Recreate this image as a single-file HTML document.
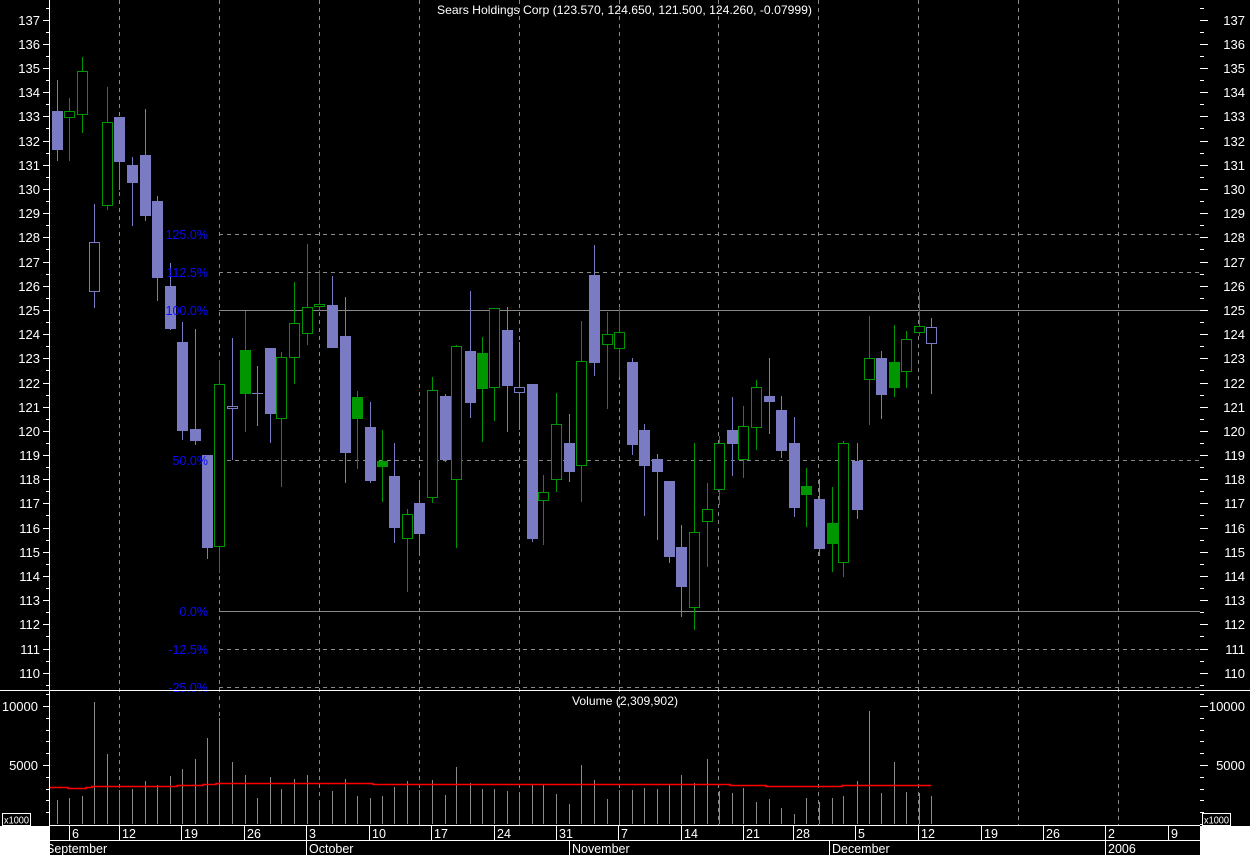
<!DOCTYPE html>
<html><head><meta charset="utf-8"><style>
html,body{margin:0;padding:0;background:#000;}
svg{display:block;}
text{font-family:"Liberation Sans",sans-serif;fill:#fff;}
.l{stroke:#7b7bc3;stroke-width:1;fill:none}
.lf{fill:#7b7bc3}
.lh{fill:#000;stroke:#7b7bc3;stroke-width:1}
.g{stroke:#009600;stroke-width:1;fill:none}
.gf{fill:#009600}
.gh{fill:#000;stroke:#009600;stroke-width:1}
.v{stroke:#8a8a8a;stroke-width:1}
.fib{fill:#0a0aff;font-size:12.5px}
</style></head><body>
<svg width="1250" height="855" viewBox="0 0 1250 855" xmlns="http://www.w3.org/2000/svg">
<rect width="1250" height="855" fill="#000"/>
<g stroke="#8a8a8a" stroke-dasharray="4,4" stroke-width="1">
<path d="M119.5 0V825M219.5 0V825M319.5 0V825M419.5 0V825M519.5 0V825M619.5 0V825M718.5 0V825M818.5 0V825M918.5 0V825M1018.5 0V825M1118.5 0V825"/>
<path d="M219 234.5H1200M219 272.5H1200M219 460.5H1200M219 649.5H1200M219 687.5H1200"/>
</g>
<path d="M219 310.5H1200M219 611.5H1200" stroke="#8a8a8a" stroke-width="1"/>
<g>
<line class="l" x1="57.5" y1="80" x2="57.5" y2="161"/><rect class="lf" x="52" y="111" width="11" height="39"/>
<line class="g" x1="69.5" y1="98" x2="69.5" y2="161"/><rect class="gh" x="64.5" y="111.5" width="10" height="6"/>
<line class="g" x1="82.5" y1="57" x2="82.5" y2="133"/><rect class="gh" x="77.5" y="71.5" width="10" height="43"/>
<line class="l" x1="94.5" y1="204" x2="94.5" y2="308"/><rect class="lh" x="89.5" y="242.5" width="10" height="49"/>
<line class="g" x1="107.5" y1="87" x2="107.5" y2="210"/><rect class="gh" x="102.5" y="122.5" width="10" height="83"/>
<line class="l" x1="119.5" y1="117" x2="119.5" y2="190"/><rect class="lf" x="114" y="117" width="11" height="45"/>
<line class="l" x1="132.5" y1="157" x2="132.5" y2="226"/><rect class="lf" x="127" y="165" width="11" height="18"/>
<line class="l" x1="145.5" y1="109" x2="145.5" y2="221"/><rect class="lf" x="140" y="155" width="11" height="61"/>
<line class="l" x1="157.5" y1="196" x2="157.5" y2="301"/><rect class="lf" x="152" y="201" width="11" height="77"/>
<line class="l" x1="170.5" y1="263" x2="170.5" y2="330"/><rect class="lf" x="165" y="286" width="11" height="43"/>
<line class="l" x1="182.5" y1="322" x2="182.5" y2="440"/><rect class="lf" x="177" y="342" width="11" height="89"/>
<line class="l" x1="195.5" y1="329" x2="195.5" y2="445"/><rect class="lf" x="190" y="429" width="11" height="12"/>
<line class="l" x1="207.5" y1="455" x2="207.5" y2="559"/><rect class="lf" x="202" y="455" width="11" height="93"/>
<line class="g" x1="219.5" y1="360" x2="219.5" y2="573"/><rect class="gh" x="214.5" y="384.5" width="10" height="162"/>
<line class="l" x1="232.5" y1="338" x2="232.5" y2="460"/><rect class="lh" x="227.5" y="406.5" width="10" height="2"/>
<line class="g" x1="245.5" y1="311" x2="245.5" y2="432"/><rect class="gf" x="240" y="350" width="11" height="44"/>
<line class="l" x1="257.5" y1="366" x2="257.5" y2="426"/><line class="l" x1="252" y1="393.5" x2="263" y2="393.5"/>
<line class="l" x1="270.5" y1="348" x2="270.5" y2="443"/><rect class="lf" x="265" y="348" width="11" height="66"/>
<line class="g" x1="281.5" y1="352" x2="281.5" y2="487"/><rect class="gh" x="276.5" y="357.5" width="10" height="61"/>
<line class="g" x1="294.5" y1="282" x2="294.5" y2="384"/><rect class="gh" x="289.5" y="323.5" width="10" height="34"/>
<line class="g" x1="307.5" y1="244" x2="307.5" y2="345"/><rect class="gh" x="302.5" y="307.5" width="10" height="26"/>
<line class="g" x1="319.5" y1="270" x2="319.5" y2="310"/><rect class="gh" x="314.5" y="304.5" width="10" height="2"/>
<line class="l" x1="332.5" y1="276" x2="332.5" y2="348"/><rect class="lf" x="327" y="305" width="11" height="43"/>
<line class="l" x1="345.5" y1="297" x2="345.5" y2="483"/><rect class="lf" x="340" y="336" width="11" height="117"/>
<line class="g" x1="357.5" y1="391" x2="357.5" y2="469"/><rect class="gf" x="352" y="397" width="11" height="22"/>
<line class="l" x1="370.5" y1="402" x2="370.5" y2="483"/><rect class="lf" x="365" y="427" width="11" height="54"/>
<line class="g" x1="382.5" y1="430" x2="382.5" y2="502"/><rect class="gf" x="377" y="461" width="11" height="6"/>
<line class="l" x1="394.5" y1="443" x2="394.5" y2="543"/><rect class="lf" x="389" y="476" width="11" height="52"/>
<line class="g" x1="407.5" y1="509" x2="407.5" y2="592"/><rect class="gh" x="402.5" y="514.5" width="10" height="24"/>
<line class="l" x1="419.5" y1="480" x2="419.5" y2="554"/><rect class="lf" x="414" y="503" width="11" height="31"/>
<line class="g" x1="432.5" y1="377" x2="432.5" y2="503"/><rect class="gh" x="427.5" y="390.5" width="10" height="107"/>
<line class="l" x1="445.5" y1="394" x2="445.5" y2="462"/><rect class="lf" x="440" y="396" width="11" height="64"/>
<line class="g" x1="456.5" y1="345" x2="456.5" y2="548"/><rect class="gh" x="451.5" y="346.5" width="10" height="133"/>
<line class="l" x1="470.5" y1="291" x2="470.5" y2="418"/><rect class="lf" x="465" y="351" width="11" height="52"/>
<line class="g" x1="482.5" y1="337" x2="482.5" y2="442"/><rect class="gf" x="477" y="353" width="11" height="36"/>
<line class="g" x1="494.5" y1="308" x2="494.5" y2="421"/><rect class="gh" x="489.5" y="308.5" width="10" height="79"/>
<line class="l" x1="507.5" y1="307" x2="507.5" y2="432"/><rect class="lf" x="502" y="330" width="11" height="56"/>
<line class="l" x1="519.5" y1="342" x2="519.5" y2="430"/><rect class="lh" x="514.5" y="387.5" width="10" height="5"/>
<line class="l" x1="532.5" y1="384" x2="532.5" y2="542"/><rect class="lf" x="527" y="384" width="11" height="155"/>
<line class="g" x1="543.5" y1="475" x2="543.5" y2="545"/><rect class="gh" x="538.5" y="492.5" width="10" height="8"/>
<line class="g" x1="556.5" y1="393" x2="556.5" y2="492"/><rect class="gh" x="551.5" y="424.5" width="10" height="55"/>
<line class="l" x1="569.5" y1="414" x2="569.5" y2="482"/><rect class="lf" x="564" y="443" width="11" height="29"/>
<line class="g" x1="581.5" y1="321" x2="581.5" y2="502"/><rect class="gh" x="576.5" y="361.5" width="10" height="104"/>
<line class="l" x1="594.5" y1="245" x2="594.5" y2="376"/><rect class="lf" x="589" y="275" width="11" height="88"/>
<line class="g" x1="607.5" y1="312" x2="607.5" y2="409"/><rect class="gh" x="602.5" y="334.5" width="10" height="10"/>
<line class="g" x1="619.5" y1="307" x2="619.5" y2="377"/><rect class="gh" x="614.5" y="332.5" width="10" height="16"/>
<line class="l" x1="632.5" y1="358" x2="632.5" y2="455"/><rect class="lf" x="627" y="362" width="11" height="83"/>
<line class="l" x1="644.5" y1="424" x2="644.5" y2="516"/><rect class="lf" x="639" y="430" width="11" height="36"/>
<line class="l" x1="657.5" y1="454" x2="657.5" y2="540"/><rect class="lf" x="652" y="459" width="11" height="13"/>
<line class="l" x1="669.5" y1="481" x2="669.5" y2="563"/><rect class="lf" x="664" y="481" width="11" height="76"/>
<line class="l" x1="681.5" y1="525" x2="681.5" y2="617"/><rect class="lf" x="676" y="547" width="11" height="40"/>
<line class="g" x1="694.5" y1="443" x2="694.5" y2="630"/><rect class="gh" x="689.5" y="532.5" width="10" height="75"/>
<line class="g" x1="707.5" y1="483" x2="707.5" y2="567"/><rect class="gh" x="702.5" y="509.5" width="10" height="12"/>
<line class="g" x1="719.5" y1="436" x2="719.5" y2="505"/><rect class="gh" x="714.5" y="443.5" width="10" height="46"/>
<line class="l" x1="732.5" y1="397" x2="732.5" y2="476"/><rect class="lf" x="727" y="430" width="11" height="14"/>
<line class="g" x1="743.5" y1="406" x2="743.5" y2="478"/><rect class="gh" x="738.5" y="426.5" width="10" height="33"/>
<line class="g" x1="756.5" y1="380" x2="756.5" y2="450"/><rect class="gh" x="751.5" y="387.5" width="10" height="40"/>
<line class="l" x1="769.5" y1="358" x2="769.5" y2="434"/><rect class="lf" x="764" y="396" width="11" height="6"/>
<line class="l" x1="781.5" y1="396" x2="781.5" y2="458"/><rect class="lf" x="776" y="410" width="11" height="41"/>
<line class="l" x1="794.5" y1="417" x2="794.5" y2="517"/><rect class="lf" x="789" y="443" width="11" height="65"/>
<line class="g" x1="806.5" y1="468" x2="806.5" y2="527"/><rect class="gf" x="801" y="486" width="11" height="9"/>
<line class="l" x1="819.5" y1="479" x2="819.5" y2="556"/><rect class="lf" x="814" y="499" width="11" height="50"/>
<line class="g" x1="832.5" y1="487" x2="832.5" y2="572"/><rect class="gf" x="827" y="523" width="11" height="21"/>
<line class="g" x1="843.5" y1="441" x2="843.5" y2="577"/><rect class="gh" x="838.5" y="443.5" width="10" height="119"/>
<line class="l" x1="857.5" y1="443" x2="857.5" y2="519"/><rect class="lf" x="852" y="461" width="11" height="49"/>
<line class="g" x1="869.5" y1="316" x2="869.5" y2="425"/><rect class="gh" x="864.5" y="358.5" width="10" height="21"/>
<line class="l" x1="881.5" y1="351" x2="881.5" y2="419"/><rect class="lf" x="876" y="358" width="11" height="37"/>
<line class="g" x1="894.5" y1="325" x2="894.5" y2="397"/><rect class="gf" x="889" y="362" width="11" height="26"/>
<line class="g" x1="906.5" y1="331" x2="906.5" y2="388"/><rect class="gh" x="901.5" y="339.5" width="10" height="32"/>
<line class="g" x1="919.5" y1="292" x2="919.5" y2="336"/><rect class="gh" x="914.5" y="326.5" width="10" height="6"/>
<line class="l" x1="931.5" y1="318" x2="931.5" y2="394"/><rect class="lh" x="926.5" y="327.5" width="10" height="16"/>
</g>
<g text-anchor="end">
<text x="208" y="239" class="fib">125.0%</text>
<text x="208" y="277" class="fib">112.5%</text>
<text x="208" y="315" class="fib">100.0%</text>
<text x="208" y="465" class="fib">50.0%</text>
<text x="208" y="616" class="fib">0.0%</text>
<text x="208" y="654" class="fib">-12.5%</text>
<text x="208" y="692" class="fib">-25.0%</text>
</g>
<path class="v" d="M57.5 824V800M69.5 824V798M82.5 824V796M94.5 824V702M107.5 824V754M119.5 824V790M132.5 824V789M145.5 824V781M157.5 824V785M170.5 824V776M182.5 824V769M195.5 824V759M207.5 824V738M219.5 824V718M232.5 824V762M245.5 824V775M257.5 824V798M270.5 824V777M281.5 824V789M294.5 824V779M307.5 824V775M319.5 824V802M332.5 824V791M345.5 824V779M357.5 824V796M370.5 824V798M382.5 824V796M394.5 824V787M407.5 824V781M419.5 824V790M432.5 824V780M445.5 824V795M456.5 824V767M470.5 824V783M482.5 824V789M494.5 824V789M507.5 824V791M519.5 824V793M532.5 824V785M543.5 824V785M556.5 824V794M569.5 824V804M581.5 824V765M594.5 824V780M607.5 824V799M619.5 824V790M632.5 824V790M644.5 824V788M657.5 824V789M669.5 824V785M681.5 824V775M694.5 824V783M707.5 824V759M719.5 824V791M732.5 824V793M743.5 824V788M756.5 824V802M769.5 824V799M781.5 824V808M794.5 824V814M806.5 824V798M819.5 824V802M832.5 824V798M843.5 824V796M857.5 824V781M869.5 824V711M881.5 824V793M894.5 824V762M906.5 824V792M919.5 824V793M931.5 824V796"/>
<path d="M49 787.5H68V788.5H86V787.5H92V786.5H177V785.5H203V784.5H216V783.5H373V784.5H730V785.5H766V786.5H842V785.5H931" stroke="#ff0000" stroke-width="1.5" fill="none"/>
<text x="437" y="14" font-size="12" textLength="375" lengthAdjust="spacingAndGlyphs">Sears Holdings Corp (123.570, 124.650, 121.500, 124.260, -0.07999)</text>
<text x="572" y="705" font-size="12" textLength="106" lengthAdjust="spacingAndGlyphs">Volume (2,309,902)</text>
<path d="M0 690.5H1250" stroke="#fff" stroke-width="1"/>
<path d="M49.5 0V855" stroke="#fff" stroke-width="1"/>
<path stroke="#fff" stroke-width="1" d="M43 20.5H49M43 44.5H49M43 68.5H49M43 92.5H49M43 116.5H49M43 141.5H49M43 165.5H49M43 189.5H49M43 213.5H49M43 237.5H49M43 262.5H49M43 286.5H49M43 310.5H49M43 334.5H49M43 358.5H49M43 383.5H49M43 407.5H49M43 431.5H49M43 455.5H49M43 479.5H49M43 503.5H49M43 528.5H49M43 552.5H49M43 576.5H49M43 600.5H49M43 624.5H49M43 649.5H49M43 673.5H49M46 8.5H49M46 32.5H49M46 56.5H49M46 80.5H49M46 104.5H49M46 128.5H49M46 153.5H49M46 177.5H49M46 201.5H49M46 225.5H49M46 249.5H49M46 274.5H49M46 298.5H49M46 322.5H49M46 346.5H49M46 370.5H49M46 395.5H49M46 419.5H49M46 443.5H49M46 467.5H49M46 491.5H49M46 515.5H49M46 540.5H49M46 564.5H49M46 588.5H49M46 612.5H49M46 636.5H49M46 661.5H49M46 685.5H49M43 706.5H49M43 765.5H49M46 694.5H49M46 718.5H49M46 730.5H49M46 741.5H49M46 753.5H49M46 777.5H49M46 789.5H49M46 800.5H49M46 812.5H49"/>
<path stroke="#fff" stroke-width="1" d="M1200 20.5H1208M1200 44.5H1208M1200 68.5H1208M1200 92.5H1208M1200 116.5H1208M1200 141.5H1208M1200 165.5H1208M1200 189.5H1208M1200 213.5H1208M1200 237.5H1208M1200 262.5H1208M1200 286.5H1208M1200 310.5H1208M1200 334.5H1208M1200 358.5H1208M1200 383.5H1208M1200 407.5H1208M1200 431.5H1208M1200 455.5H1208M1200 479.5H1208M1200 503.5H1208M1200 528.5H1208M1200 552.5H1208M1200 576.5H1208M1200 600.5H1208M1200 624.5H1208M1200 649.5H1208M1200 673.5H1208M1200 8.5H1204M1200 32.5H1204M1200 56.5H1204M1200 80.5H1204M1200 104.5H1204M1200 128.5H1204M1200 153.5H1204M1200 177.5H1204M1200 201.5H1204M1200 225.5H1204M1200 249.5H1204M1200 274.5H1204M1200 298.5H1204M1200 322.5H1204M1200 346.5H1204M1200 370.5H1204M1200 395.5H1204M1200 419.5H1204M1200 443.5H1204M1200 467.5H1204M1200 491.5H1204M1200 515.5H1204M1200 540.5H1204M1200 564.5H1204M1200 588.5H1204M1200 612.5H1204M1200 636.5H1204M1200 661.5H1204M1200 685.5H1204M1200 706.5H1208M1200 765.5H1208M1200 694.5H1204M1200 718.5H1204M1200 730.5H1204M1200 741.5H1204M1200 753.5H1204M1200 777.5H1204M1200 789.5H1204M1200 800.5H1204M1200 812.5H1204M1200 824.5H1204"/>
<g font-size="13" text-anchor="end">
<text x="40" y="25">137</text><text x="40" y="49">136</text><text x="40" y="73">135</text><text x="40" y="97">134</text><text x="40" y="121">133</text><text x="40" y="146">132</text><text x="40" y="170">131</text><text x="40" y="194">130</text><text x="40" y="218">129</text><text x="40" y="242">128</text><text x="40" y="267">127</text><text x="40" y="291">126</text><text x="40" y="315">125</text><text x="40" y="339">124</text><text x="40" y="363">123</text><text x="40" y="388">122</text><text x="40" y="412">121</text><text x="40" y="436">120</text><text x="40" y="460">119</text><text x="40" y="484">118</text><text x="40" y="508">117</text><text x="40" y="533">116</text><text x="40" y="557">115</text><text x="40" y="581">114</text><text x="40" y="605">113</text><text x="40" y="629">112</text><text x="40" y="654">111</text><text x="40" y="678">110</text>
<text x="38" y="711">10000</text><text x="38" y="770">5000</text>
</g>
<g font-size="13" text-anchor="end">
<text x="1245" y="25">137</text><text x="1245" y="49">136</text><text x="1245" y="73">135</text><text x="1245" y="97">134</text><text x="1245" y="121">133</text><text x="1245" y="146">132</text><text x="1245" y="170">131</text><text x="1245" y="194">130</text><text x="1245" y="218">129</text><text x="1245" y="242">128</text><text x="1245" y="267">127</text><text x="1245" y="291">126</text><text x="1245" y="315">125</text><text x="1245" y="339">124</text><text x="1245" y="363">123</text><text x="1245" y="388">122</text><text x="1245" y="412">121</text><text x="1245" y="436">120</text><text x="1245" y="460">119</text><text x="1245" y="484">118</text><text x="1245" y="508">117</text><text x="1245" y="533">116</text><text x="1245" y="557">115</text><text x="1245" y="581">114</text><text x="1245" y="605">113</text><text x="1245" y="629">112</text><text x="1245" y="654">111</text><text x="1245" y="678">110</text>
<text x="1245" y="711">10000</text><text x="1245" y="770">5000</text>
</g>
<path stroke="#fff" stroke-width="1" d="M49 825.5H1200M49 840.5H1200M69.5 825V840M119.5 825V840M181.5 825V840M244.5 825V840M306.5 825V840M369.5 825V840M431.5 825V840M494.5 825V840M556.5 825V840M618.5 825V840M681.5 825V840M743.5 825V840M793.5 825V840M855.5 825V840M918.5 825V840M981.5 825V840M1043.5 825V840M1105.5 825V840M1168.5 825V840M306.5 840V855M569.5 840V855M829.5 840V855M1105.5 840V855"/>
<g font-size="12.5">
<text x="72" y="838">6</text><text x="122" y="838">12</text><text x="184" y="838">19</text><text x="247" y="838">26</text><text x="309" y="838">3</text><text x="372" y="838">10</text><text x="434" y="838">17</text><text x="497" y="838">24</text><text x="559" y="838">31</text><text x="621" y="838">7</text><text x="684" y="838">14</text><text x="746" y="838">21</text><text x="796" y="838">28</text><text x="858" y="838">5</text><text x="921" y="838">12</text><text x="984" y="838">19</text><text x="1046" y="838">26</text><text x="1108" y="838">2</text><text x="1171" y="838">9</text>
<text x="46" y="853">September</text><text x="309" y="853">October</text><text x="572" y="853">November</text><text x="832" y="853">December</text><text x="1108" y="853">2006</text>
</g>
<rect x="0" y="826" width="49" height="29" fill="#fff"/>
<rect x="1200" y="826" width="50" height="29" fill="#fff"/>
<rect x="2.5" y="813.5" width="28" height="12" fill="#000" stroke="#fff"/>
<text x="4" y="823.5" font-size="10.5" textLength="25" lengthAdjust="spacingAndGlyphs">x1000</text>
<rect x="1202.5" y="813.5" width="28" height="12" fill="#000" stroke="#fff"/>
<text x="1204" y="823.5" font-size="10.5" textLength="25" lengthAdjust="spacingAndGlyphs">x1000</text>
</svg>
</body></html>
